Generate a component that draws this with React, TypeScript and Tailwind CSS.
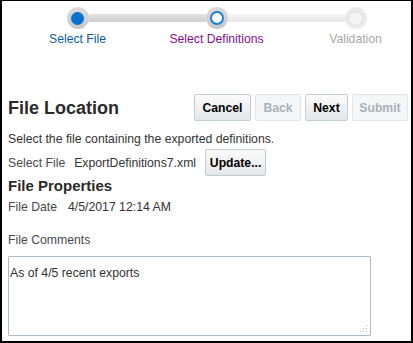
import React from 'react';

type StopState = 'done' | 'current' | 'todo';

const stops: { label: string; state: StopState; left: string; right: string; color: string }[] = [
  { label: 'Select File', state: 'done', left: 'bg-transparent', right: 'bg-gradient-to-b from-[#e2e2e2] to-[#cfcfcf]', color: 'text-[#0e5c9f]' },
  { label: 'Select Definitions', state: 'current', left: 'bg-gradient-to-b from-[#e2e2e2] to-[#cfcfcf]', right: 'bg-gradient-to-b from-[#f4f4f4] to-[#e8e8e8]', color: 'text-[#85128c]' },
  { label: 'Validation', state: 'todo', left: 'bg-gradient-to-b from-[#f4f4f4] to-[#e8e8e8]', right: 'bg-transparent', color: 'text-[#a8a8a8]' },
];

function StopDot({ state }: { state: StopState }) {
  if (state === 'todo') {
    return (
      <div className="w-[22px] h-[22px] rounded-full bg-[#ebebeb] flex items-center justify-center shrink-0">
        <div className="w-[15px] h-[15px] rounded-full bg-[#f3f4f7] border border-[#dedede]" />
      </div>
    );
  }
  return (
    <div className="w-[22px] h-[22px] rounded-full bg-gradient-to-b from-[#dcdcdc] to-[#c8c8c8] flex items-center justify-center shrink-0">
      {state === 'done' ? (
        <div className="w-[13px] h-[13px] rounded-full bg-[#0572ce]" />
      ) : (
        <div className="w-[14px] h-[14px] rounded-full bg-white border-2 border-[#1b7fd6]" />
      )}
    </div>
  );
}

function Btn({ children, disabled, className = '' }: { children: React.ReactNode; disabled?: boolean; className?: string }) {
  return (
    <button
      className={`h-[27px] rounded-[2px] border font-bold text-[12.2px] leading-[14px] ${
        disabled
          ? 'border-[#e1e5e8] bg-[#f5f6f7] text-[#abb1b7]'
          : 'border-[#c3ccd4] bg-gradient-to-b from-[#fbfbfc] to-[#e4e7ea] text-black'
      } ${className}`}
    >
      {children}
    </button>
  );
}

export default function App() {
  return (
    <div
      className="w-[413px] h-[343px] box-border overflow-hidden bg-white border-black border-t border-l-2 border-r-2 border-b-2 text-[#333333]"
      style={{ fontFamily: '"Liberation Sans", Arial, sans-serif' }}
    >
      {/* train */}
      <div className="grid grid-cols-[139px_139px_139px] ml-[6px] pt-[6px]">
        {stops.map((s) => (
          <div key={s.label} className="flex flex-col items-center">
            <div className="flex items-center w-full">
              <div className={`flex-1 h-[8px] ${s.left}`} />
              <StopDot state={s.state} />
              <div className={`flex-1 h-[8px] ${s.right}`} />
            </div>
            <div className={`mt-[3px] text-[12.2px] leading-[14px] whitespace-nowrap ${s.color}`}>{s.label}</div>
          </div>
        ))}
      </div>

      <div className="pl-[6px] pr-[3px]">
        {/* header row */}
        <div className="flex items-center justify-between mt-[48px]">
          <h1 className="text-[18px] leading-[22px] font-bold text-[#2b2b2b]">File Location</h1>
          <div className="flex gap-[4px]">
            <Btn className="w-[57px]">Cancel</Btn>
            <Btn disabled className="w-[46px]">Back</Btn>
            <Btn className="w-[43px]">Next</Btn>
            <Btn disabled className="w-[56px]">Submit</Btn>
          </div>
        </div>

        <p className="mt-[11px] text-[12.25px] leading-[14px]">Select the file containing the exported definitions.</p>

        <div className="flex items-center mt-[3px] text-[12.25px] leading-[14px]">
          <span className="text-[#4a4a4a]">Select File</span>
          <span className="ml-[9px]">ExportDefinitions7.xml</span>
          <Btn className="ml-[9px] w-[61px]">Update...</Btn>
        </div>

        <h2 className="mt-[1px] text-[15px] leading-[17px] font-bold text-[#2b2b2b]">File Properties</h2>

        <div className="flex mt-[6px] text-[12.25px] leading-[14px]">
          <span className="text-[#4a4a4a]">File Date</span>
          <span className="ml-[11px]">4/5/2017 12:14 AM</span>
        </div>

        <div className="mt-[19px] text-[12.25px] leading-[14px] text-[#4a4a4a]">File Comments</div>

        <div className="relative mt-[9px] w-[363px] h-[80px]">
          <textarea
            readOnly
            defaultValue="As of 4/5 recent exports"
            className="w-full h-full resize-none border border-[#abbccd] rounded-[1px] pt-[9px] pl-[1px] text-[12.25px] leading-[14px] text-[#333333] outline-none"
            style={{ fontFamily: '"Liberation Sans", Arial, sans-serif' }}
          />
          <svg className="absolute right-[3px] bottom-[3px]" width="8" height="8" viewBox="0 0 8 8">
            <g fill="#b5b5b5">
              <rect x="6" y="0" width="1" height="1" />
              <rect x="3" y="3" width="1" height="1" />
              <rect x="6" y="3" width="1" height="1" />
              <rect x="0" y="6" width="1" height="1" />
              <rect x="3" y="6" width="1" height="1" />
              <rect x="6" y="6" width="1" height="1" />
            </g>
          </svg>
        </div>
      </div>
    </div>
  );
}
